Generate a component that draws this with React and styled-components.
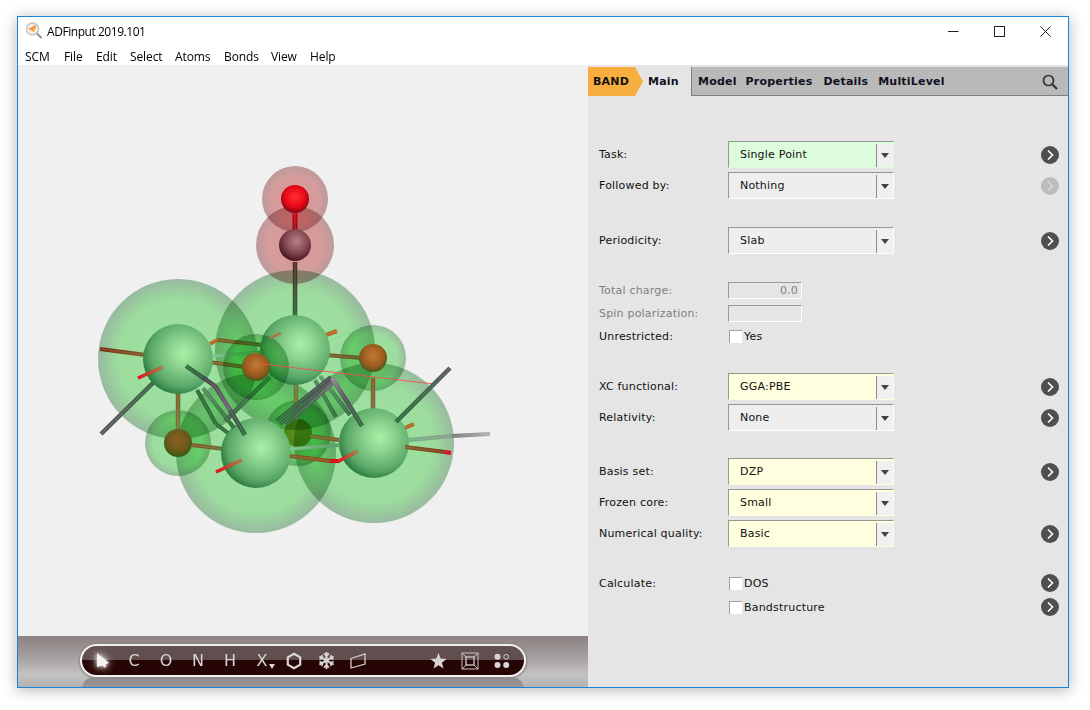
import React from "react";
import styled, { createGlobalStyle } from "styled-components";
import { FaSnowflake } from "react-icons/fa";

const GlobalStyle = createGlobalStyle`
  html, body {
    margin: 0;
    padding: 0;
    background: #ffffff;
    overflow: hidden;
  }
`;

const Page = styled.div`
  width: 1090px;
  height: 710px;
  padding: 16px 0 0 17px;
  box-sizing: border-box;
`;

const Window = styled.div`
  width: 1052px;
  height: 672px;
  box-sizing: border-box;
  border: 1px solid #1883d7;
  background: #ffffff;
  box-shadow: 0 2px 14px rgba(0, 0, 0, 0.3);
  display: flex;
  flex-direction: column;
`;

const TitleBar = styled.div`
  height: 28px;
  display: flex;
  align-items: center;
  padding-left: 7px;
  font-family: "Open Sans", sans-serif;
  font-size: 12px;
  letter-spacing: -0.45px;
  color: #000000;
`;

const TitleText = styled.span`
  margin-left: 4px;
  margin-top: 1px;
  flex: 1;
`;

const WinButton = styled.div`
  width: 46px;
  height: 28px;
  display: flex;
  align-items: center;
  justify-content: center;
`;

const MenuBar = styled.div`
  height: 20px;
  padding: 2px 0 0 7px;
  box-sizing: border-box;
  display: flex;
  align-items: center;
  font-family: "Open Sans", sans-serif;
  font-size: 12px;
  letter-spacing: -0.1px;
  color: #000000;
`;

const MenuItem = styled.span`
  width: ${(props) => props.$w}px;
`;

const Body = styled.div`
  flex: 1;
  display: flex;
  min-height: 0;
`;

const LeftPane = styled.div`
  width: 570px;
  display: flex;
  flex-direction: column;
  background: #f0f0f0;
`;

const Canvas = styled.svg`
  display: block;
  width: 570px;
  height: 571px;
`;

const Halo = styled.circle`
  mix-blend-mode: multiply;
`;

const ToolDock = styled.div`
  height: 51px;
  box-sizing: border-box;
  padding: 8px 0 0 62px;
  background: linear-gradient(#8b8181 0%, #a8a3a3 45%, #c4c1c1 75%, #b5b2b2 100%);
  overflow: hidden;
`;

const ToolPill = styled.div`
  position: relative;
  width: 446px;
  height: 33px;
  box-sizing: border-box;
  border: 2px solid #f2f0f0;
  border-radius: 17px;
  padding: 0 6px;
  display: flex;
  align-items: center;
  background: linear-gradient(#635151 0%, #5f4d4d 48%, #280505 50%, #280505 100%);
  box-shadow: 0 1px 3px rgba(0, 0, 0, 0.45);
  color: #d9d5d5;

  &::after {
    content: "";
    position: absolute;
    left: 0;
    right: 0;
    top: 31px;
    height: 16px;
    border-radius: 12px 12px 0 0;
    background: linear-gradient(#8f8a8a, #a5a1a1);
    z-index: 0;
  }
`;

const ToolItem = styled.div`
  width: 32px;
  margin-right: ${(props) => props.$mr || 0}px;
  height: 29px;
  flex: none;
  display: flex;
  align-items: center;
  justify-content: center;
  position: relative;
  font-family: "DejaVu Sans", sans-serif;
  font-size: 16px;
  color: #d9d5d5;
`;

const ToolSpacer = styled.div`
  flex: 1;
`;

const CaretMark = styled.span`
  position: absolute;
  right: 3px;
  bottom: 6px;
  width: 0;
  height: 0;
  border-left: 3.5px solid transparent;
  border-right: 3.5px solid transparent;
  border-top: 5px solid #d9d5d5;
`;

const RightPane = styled.div`
  width: 480px;
  box-sizing: border-box;
  padding-top: 2px;
  background: #e5e5e5;
  font-family: "DejaVu Sans", sans-serif;
  font-size: 11px;
  letter-spacing: 0.2px;
  color: #111111;
`;

const TabBar = styled.div`
  height: 29px;
  box-sizing: border-box;
  display: flex;
  align-items: center;
  background: #b9b9b9;
  border-bottom: 1px solid #7f7f7f;
  font-weight: 700;
  position: relative;
`;

const BandTab = styled.div`
  position: relative;
  z-index: 1;
  width: 55px;
  height: 29px;
  margin-bottom: -1px;
  box-sizing: border-box;
  padding-left: 5px;
  display: flex;
  align-items: center;
  background: #f7ae3e;
  clip-path: polygon(0 0, 47px 0, 55px 50%, 47px 100%, 0 100%);
  color: #111111;
`;

const MainTab = styled.div`
  width: 57px;
  height: 29px;
  margin-left: -8px;
  margin-bottom: -1px;
  box-sizing: border-box;
  padding-left: 13px;
  display: flex;
  align-items: center;
  background: #e5e5e5;
  border-right: 1px solid #7f7f7f;
  color: #111122;
`;

const Tab = styled.div`
  margin-left: ${(props) => props.$ml}px;
  color: #111122;
`;

const SearchButton = styled.div`
  position: absolute;
  right: 9px;
  top: 6px;
  height: 16px;
`;

const Form = styled.div`
  display: flex;
  flex-direction: column;
`;

const Row = styled.div`
  display: grid;
  grid-template-columns: 129px 1fr 18px;
  align-items: center;
  height: ${(props) => props.$h}px;
  margin-top: ${(props) => props.$mt || 0}px;
  padding: 0 9px 0 11px;
`;

const Label = styled.div`
  color: ${(props) => (props.$disabled ? "#808080" : "#111111")};
  white-space: nowrap;
`;

const comboColors = {
  green: "#ddfcdb",
  yellow: "#ffffdf",
  plain: "#eeeeee",
};

const Combo = styled.div`
  width: 166px;
  height: 27px;
  box-sizing: border-box;
  display: flex;
  align-items: center;
  padding-left: 11px;
  background: ${(props) => comboColors[props.$kind]};
  border-top: 1px solid #939a93;
  border-left: 1px solid #939a93;
  border-right: 1px solid ${(props) => (props.$kind === "plain" ? "#ffffff" : comboColors[props.$kind])};
  border-bottom: 1px solid ${(props) => (props.$kind === "plain" ? "#ffffff" : comboColors[props.$kind])};
`;

const ComboText = styled.span`
  flex: 1;
`;

const ComboCaret = styled.div`
  width: 17px;
  height: 23px;
  margin: 1px 0 0 0;
  box-sizing: border-box;
  border-left: 1px solid #8c8c8c;
  background: #f0f0f0;
  display: flex;
  align-items: center;
  justify-content: center;

  &::before {
    content: "";
    width: 0;
    height: 0;
    border-left: 4px solid transparent;
    border-right: 4px solid transparent;
    border-top: 5px solid #444444;
  }
`;

const Field = styled.div`
  width: 74px;
  height: 17px;
  box-sizing: border-box;
  padding-right: 3px;
  text-align: right;
  line-height: 15px;
  color: #808080;
  border-top: 1px solid #9a9a9a;
  border-left: 1px solid #9a9a9a;
  border-right: 1px solid #ffffff;
  border-bottom: 1px solid #ffffff;
`;

const Check = styled.label`
  display: flex;
  align-items: center;
  gap: 2px;
`;

const CheckBox = styled.span`
  width: 13px;
  height: 13px;
  margin-left: 1px;
  box-sizing: border-box;
  background: #ffffff;
  border-top: 1px solid #a0a0a0;
  border-left: 1px solid #a0a0a0;
`;

const NextButton = styled.div`
  width: 18px;
  height: 18px;
  border-radius: 50%;
  background: ${(props) => (props.$disabled ? "#bdbdbd" : "#4f4f4f")};
  display: flex;
  align-items: center;
  justify-content: center;
  color: ${(props) => (props.$disabled ? "#d8d8d8" : "#ffffff")};
`;

const Next = ({ disabled }) => (
  <NextButton $disabled={disabled}>
    <svg width="10" height="12" viewBox="0 0 10 12">
      <path d="M3 1.5 L7.5 6 L3 10.5" fill="none" stroke="currentColor" strokeWidth="1.6" />
    </svg>
  </NextButton>
);

const AppIcon = () => (
  <svg width="18" height="18" viewBox="0 0 18 18">
    <circle cx="7.5" cy="7" r="6" fill="#f4f0ea" stroke="#c4c0bc" strokeWidth="1.4" />
    <path d="M3 7 L10.5 3 L11 6.5 L9 7.5 L9.5 10.5 L6.5 8.5 Z" fill="#f59a3c" />
    <path d="M12 11.5 L16.5 16" stroke="#8f8f8f" strokeWidth="2" />
  </svg>
);

// page coordinates, canvas viewBox starts at 18,65
const halos = [
  [178, 359, 80, "haloGreen"],
  [295, 350, 80, "haloGreen"],
  [256, 453, 80, "haloGreen"],
  [374, 443, 80, "haloGreen"],
  [178, 443, 33, "haloGreen"],
  [298, 433, 33, "haloGreen"],
  [373, 358, 33, "haloGreen"],
  [295, 199, 33, "haloRed"],
  [295, 245, 39, "haloRed"],
];

const BR = "#7d5a22";
const OR = "#b0641e";
const RD = "#e00010";
const GN = "#2a6a36";
const DG = "#3a6244";
const GY = "#4f4d54";
const PU = "#6a6070";
const LG = "#7fc28c";

const backSticks = [
  [295, 262, 295, 322, 4.5, "#4a2a2a", GN],
  [295, 213, 295, 232, 5, "#d00010", "#8a0a14"],
  [100, 349, 146, 355, 4, "#7a2c10", BR],
  [178, 390, 178, 432, 4.5, BR, "#6f7a3a"],
  [101, 434, 155, 381, 4.5, "#55555a", DG],
  [210, 344, 217, 340, 3.5, OR, OR],
  [217, 340, 262, 345, 4, BR, "#4f6a22"],
  [209, 362, 245, 367, 4, BR, "#5c6a26"],
  [213, 356, 262, 352, 3.5, LG, "#3f9a4a"],
  [192, 445, 224, 449, 4, BR, "#6a6a30"],
  [296, 383, 296, 420, 4.5, "#6a7a3a", "#6f6a2a"],
  [225, 421, 270, 377, 4.5, DG, "#2f7f3f"],
  [326, 355, 362, 358, 4, BR, "#5a5a20"],
  [373, 378, 373, 412, 4.5, BR, "#7a6a3a"],
  [326, 335, 337, 331, 4, OR, OR],
  [408, 440, 452, 436, 4, "#6fae7c", "#8a9a8c"],
  [452, 436, 490, 434, 4, "#777777", "#b0b0b0"],
];

const frontSticks = [
  [186, 366, 202, 377, 4.5, GN, "#33573c"],
  [202, 377, 215, 386, 4.5, "#3a3a40", GY],
  [215, 386, 230, 410, 4.5, GY, PU],
  [230, 410, 245, 435, 4.5, GY, GN],
  [197, 390, 216, 424, 4, GN, GN],
  [216, 424, 228, 433, 4, GN, GN],
  [203, 388, 234, 428, 4, "#4f8a5c", GN],
  [138, 378, 163, 367, 3.5, RD, "#a87a3c"],
  [216, 472, 242, 460, 3.5, RD, "#a87a3c"],
  [405, 428, 414, 424, 4, "#a8662a", OR],
  [396, 422, 425, 393, 4.5, GN, DG],
  [425, 393, 450, 368, 4.5, DG, "#55555a"],
  [405, 447, 445, 452, 4, BR, "#7a3a14"],
  [445, 452, 451, 453, 4, RD, RD],
  [310, 436, 339, 440, 4, "#5f6a22", BR],
  [290, 449, 340, 445, 3.5, LG, "#4f9a5c"],
  [290, 456, 330, 461, 4, BR, "#8a4a14"],
  [330, 461, 338, 461, 4, RD, RD],
  [337, 462, 358, 451, 3.5, RD, "#a87a3c"],
  [315, 380, 336, 417, 4, "#4f8a5c", GN],
  [320, 376, 350, 415, 4, "#5f9a6c", GN],
  [276, 421, 331, 377, 4, GN, GY],
  [280, 424, 333, 379, 4, GN, GY],
  [286, 425, 335, 381, 4, GN, "#6a6870"],
  [332, 378, 346, 400, 4.5, "#8a8890", GY],
  [346, 400, 362, 426, 4.5, GY, GN],
];

const Ball = ({ x, y, r, fill }) => <circle cx={x} cy={y} r={r} fill={`url(#${fill})`} />;

const Sticks = ({ list, prefix }) => (
  <>
    {list.map(([x1, y1, x2, y2, w, from, to], i) => (
      <g key={i}>
        <linearGradient id={`${prefix}${i}`} gradientUnits="userSpaceOnUse" x1={x1} y1={y1} x2={x2} y2={y2}>
          <stop offset="0" stopColor={from} />
          <stop offset="1" stopColor={to} />
        </linearGradient>
        <line x1={x1} y1={y1} x2={x2} y2={y2} stroke={`url(#${prefix}${i})`} strokeWidth={w} />
        <line x1={x1} y1={y1} x2={x2} y2={y2} stroke="#ffffff" strokeOpacity="0.12" strokeWidth={w * 0.35} />
      </g>
    ))}
  </>
);

const Molecule = () => (
  <Canvas viewBox="18 65 570 571">
    <defs>
      <radialGradient id="haloGreen" cx="0.5" cy="0.5" r="0.5">
        <stop offset="0" stopColor="#a8f2a8" />
        <stop offset="0.75" stopColor="#a6eaa8" />
        <stop offset="1" stopColor="#a2c6a8" />
      </radialGradient>
      <radialGradient id="haloRed" cx="0.5" cy="0.5" r="0.5">
        <stop offset="0" stopColor="#e8a2a2" />
        <stop offset="0.7" stopColor="#e4a6a6" />
        <stop offset="1" stopColor="#c8a4a4" />
      </radialGradient>
      <radialGradient id="ballGreen" cx="0.58" cy="0.42" r="0.66">
        <stop offset="0" stopColor="#a8f2a8" />
        <stop offset="0.3" stopColor="#8ed590" />
        <stop offset="0.72" stopColor="#5aa868" />
        <stop offset="1" stopColor="#1a6a30" />
      </radialGradient>
      <radialGradient id="ballBrown" cx="0.5" cy="0.42" r="0.6">
        <stop offset="0" stopColor="#c47a36" />
        <stop offset="0.65" stopColor="#9c5a1e" />
        <stop offset="1" stopColor="#3a5a14" />
      </radialGradient>
      <radialGradient id="ballDim" cx="0.5" cy="0.42" r="0.6">
        <stop offset="0" stopColor="#8a5f24" />
        <stop offset="0.65" stopColor="#6a5a1a" />
        <stop offset="1" stopColor="#2a5a14" />
      </radialGradient>
      <radialGradient id="ballOlive" cx="0.5" cy="0.42" r="0.6">
        <stop offset="0" stopColor="#d8a838" />
        <stop offset="1" stopColor="#a89628" />
      </radialGradient>
      <radialGradient id="ballRed" cx="0.5" cy="0.42" r="0.6">
        <stop offset="0" stopColor="#ff3030" />
        <stop offset="0.6" stopColor="#e80818" />
        <stop offset="1" stopColor="#7a0612" />
      </radialGradient>
      <radialGradient id="ballMaroon" cx="0.55" cy="0.38" r="0.66">
        <stop offset="0" stopColor="#b58088" />
        <stop offset="0.55" stopColor="#84484f" />
        <stop offset="1" stopColor="#3f1018" />
      </radialGradient>
    </defs>
    <rect x="18" y="65" width="570" height="571" fill="#f0f0f0" />
    <Ball x={298} y={433} r={14} fill="ballOlive" />
    {halos.map(([x, y, r, fill], i) => (
      <Halo key={i} cx={x} cy={y} r={r} fill={`url(#${fill})`} />
    ))}
    <Sticks list={backSticks} prefix="back" />
    <Ball x={295} y={245} r={16} fill="ballMaroon" />
    <Ball x={295} y={199} r={14} fill="ballRed" />
    <Ball x={178} y={359} r={35} fill="ballGreen" />
    <Ball x={295} y={350} r={35} fill="ballGreen" />
    <Ball x={256} y={453} r={35} fill="ballGreen" />
    <Ball x={374} y={443} r={35} fill="ballGreen" />
    <Halo cx={256} cy={367} r={33} fill="url(#haloGreen)" />
    <Ball x={256} y={367} r={14} fill="ballBrown" />
    <Ball x={373} y={358} r={14} fill="ballBrown" />
    <Ball x={178} y={443} r={14} fill="ballDim" />
    <line x1={270} y1={338} x2={281} y2={333} stroke="#a87a3c" strokeWidth="3" />
    <line x1={330} y1={341} x2={360} y2={328} stroke="#7fe07f" strokeWidth="0.8" />
    <line x1={262} y1={364} x2={434} y2={384} stroke="#f05050" strokeWidth="0.9" />
    <Sticks list={frontSticks} prefix="front" />
  </Canvas>
);

const Arrow = () => (
  <svg
    width="26"
    height="26"
    viewBox="0 0 26 26"
    style={{ filter: "drop-shadow(0 0 2px rgba(255,255,255,0.9)) drop-shadow(0 0 4px rgba(255,255,255,0.6))" }}
  >
    <path d="M6 5 L18 15 L15 16 L14.5 20 L11 17.5 L6 19 Z" fill="#f4f2f2" />
  </svg>
);

const Hexagon = () => (
  <svg width="16" height="18" viewBox="0 0 16 18">
    <path d="M8 1.8 L14.2 5.4 L14.2 12.6 L8 16.2 L1.8 12.6 L1.8 5.4 Z" fill="none" stroke="#d9d5d5" strokeWidth="2.2" />
  </svg>
);

const Plane = () => (
  <svg width="16" height="16" viewBox="0 0 16 16">
    <path d="M1 5.5 L15 1 L15 11 L1 15 Z" fill="none" stroke="#d0cccc" strokeWidth="1.3" />
  </svg>
);

const Star = () => (
  <svg width="17" height="16" viewBox="0 0 17 16">
    <path d="M8.5 0 L10.6 5.6 L16.6 5.9 L11.9 9.7 L13.5 15.6 L8.5 12.3 L3.5 15.6 L5.1 9.7 L0.4 5.9 L6.4 5.6 Z" fill="#d9d5d5" />
  </svg>
);

const Cube = () => (
  <svg width="18" height="18" viewBox="0 0 18 18" fill="none" stroke="#c4c0c0" strokeWidth="1">
    <rect x="1" y="1" width="16" height="16" />
    <rect x="5" y="5" width="8" height="8" strokeWidth="1.4" />
    <path d="M1 1 L5 5 M17 1 L13 5 M1 17 L5 13 M17 17 L13 13" />
  </svg>
);

const Dots = () => (
  <svg width="16" height="16" viewBox="0 0 16 16">
    <circle cx="3.5" cy="3.8" r="3" fill="#d9d5d5" />
    <circle cx="12.2" cy="3.8" r="2.4" fill="none" stroke="#d9d5d5" strokeWidth="0.9" />
    <circle cx="3.5" cy="12" r="3" fill="#d9d5d5" />
    <circle cx="12.2" cy="12" r="3" fill="#d9d5d5" />
  </svg>
);

const menu = [
  ["SCM", 39],
  ["File", 32],
  ["Edit", 34],
  ["Select", 45],
  ["Atoms", 49],
  ["Bonds", 47],
  ["View", 39],
  ["Help", 40],
];

const App = () => (
  <Page>
    <GlobalStyle />
    <Window>
      <TitleBar>
        <AppIcon />
        <TitleText>ADFinput 2019.101</TitleText>
        <WinButton>
          <svg width="11" height="11" viewBox="0 0 11 11">
            <path d="M0 5.5 H10.5" stroke="#222" strokeWidth="1" />
          </svg>
        </WinButton>
        <WinButton>
          <svg width="11" height="11" viewBox="0 0 11 11">
            <rect x="0.5" y="0.5" width="10" height="10" fill="none" stroke="#222" strokeWidth="1" />
          </svg>
        </WinButton>
        <WinButton>
          <svg width="11" height="11" viewBox="0 0 11 11">
            <path d="M0.5 0.5 L10.5 10.5 M10.5 0.5 L0.5 10.5" stroke="#222" strokeWidth="1" />
          </svg>
        </WinButton>
      </TitleBar>
      <MenuBar>
        {menu.map(([name, w]) => (
          <MenuItem key={name} $w={w}>
            {name}
          </MenuItem>
        ))}
      </MenuBar>
      <Body>
        <LeftPane>
          <Molecule />
          <ToolDock>
            <ToolPill>
              <ToolItem $mr={-2}>
                <Arrow />
              </ToolItem>
              <ToolItem>C</ToolItem>
              <ToolItem>O</ToolItem>
              <ToolItem>N</ToolItem>
              <ToolItem>H</ToolItem>
              <ToolItem>
                X<CaretMark />
              </ToolItem>
              <ToolItem>
                <Hexagon />
              </ToolItem>
              <ToolItem>
                <FaSnowflake size={17} />
              </ToolItem>
              <ToolItem>
                <Plane />
              </ToolItem>
              <ToolSpacer />
              <ToolItem>
                <Star />
              </ToolItem>
              <ToolItem>
                <Cube />
              </ToolItem>
              <ToolItem>
                <Dots />
              </ToolItem>
            </ToolPill>
          </ToolDock>
        </LeftPane>
        <RightPane>
          <TabBar>
            <BandTab>BAND</BandTab>
            <MainTab>Main</MainTab>
            <Tab $ml={6}>Model</Tab>
            <Tab $ml={9}>Properties</Tab>
            <Tab $ml={11}>Details</Tab>
            <Tab $ml={10}>MultiLevel</Tab>
            <SearchButton>
              <svg width="18" height="18" viewBox="0 0 18 18" fill="none" stroke="#333" strokeWidth="1.7">
                <circle cx="7.5" cy="7.5" r="5" />
                <path d="M11.5 11.5 L16 16" strokeWidth="2.2" />
              </svg>
            </SearchButton>
          </TabBar>
          <Form>
            <Row $h={27} $mt={45}>
              <Label>Task:</Label>
              <Combo $kind="green">
                <ComboText>Single Point</ComboText>
                <ComboCaret />
              </Combo>
              <Next />
            </Row>
            <Row $h={27} $mt={4}>
              <Label>Followed by:</Label>
              <Combo $kind="plain">
                <ComboText>Nothing</ComboText>
                <ComboCaret />
              </Combo>
              <Next disabled />
            </Row>
            <Row $h={27} $mt={28}>
              <Label>Periodicity:</Label>
              <Combo $kind="plain">
                <ComboText>Slab</ComboText>
                <ComboCaret />
              </Combo>
              <Next />
            </Row>
            <Row $h={23} $mt={25}>
              <Label $disabled>Total charge:</Label>
              <Field>0.0</Field>
            </Row>
            <Row $h={23}>
              <Label $disabled>Spin polarization:</Label>
              <Field />
            </Row>
            <Row $h={23}>
              <Label>Unrestricted:</Label>
              <Check>
                <CheckBox />
                Yes
              </Check>
            </Row>
            <Row $h={27} $mt={25}>
              <Label>XC functional:</Label>
              <Combo $kind="yellow">
                <ComboText>GGA:PBE</ComboText>
                <ComboCaret />
              </Combo>
              <Next />
            </Row>
            <Row $h={27} $mt={4}>
              <Label>Relativity:</Label>
              <Combo $kind="plain">
                <ComboText>None</ComboText>
                <ComboCaret />
              </Combo>
              <Next />
            </Row>
            <Row $h={27} $mt={27}>
              <Label>Basis set:</Label>
              <Combo $kind="yellow">
                <ComboText>DZP</ComboText>
                <ComboCaret />
              </Combo>
              <Next />
            </Row>
            <Row $h={27} $mt={4}>
              <Label>Frozen core:</Label>
              <Combo $kind="yellow">
                <ComboText>Small</ComboText>
                <ComboCaret />
              </Combo>
            </Row>
            <Row $h={27} $mt={4}>
              <Label>Numerical quality:</Label>
              <Combo $kind="yellow">
                <ComboText>Basic</ComboText>
                <ComboCaret />
              </Combo>
              <Next />
            </Row>
            <Row $h={24} $mt={24}>
              <Label>Calculate:</Label>
              <Check>
                <CheckBox />
                DOS
              </Check>
              <Next />
            </Row>
            <Row $h={24}>
              <span />
              <Check>
                <CheckBox />
                Bandstructure
              </Check>
              <Next />
            </Row>
          </Form>
        </RightPane>
      </Body>
    </Window>
  </Page>
);

export default App;
